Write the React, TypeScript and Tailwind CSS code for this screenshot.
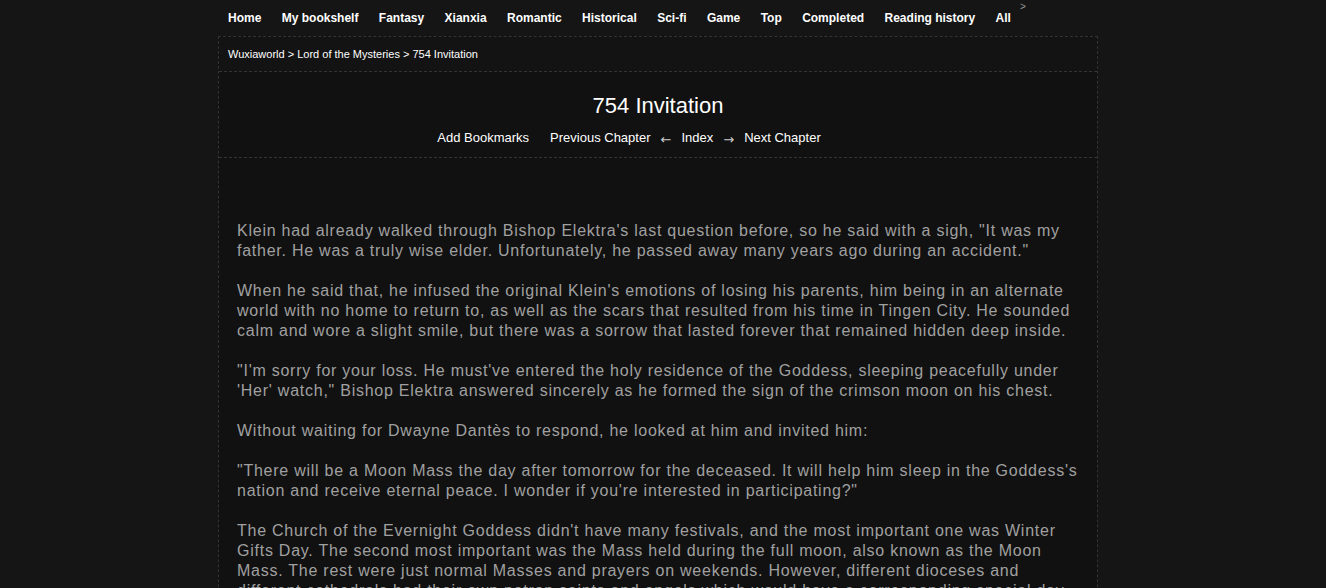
import React from "react";

const navItems = [
  "Home",
  "My bookshelf",
  "Fantasy",
  "Xianxia",
  "Romantic",
  "Historical",
  "Sci-fi",
  "Game",
  "Top",
  "Completed",
  "Reading history",
  "All",
];

const paragraphs = [
  `Klein had already walked through Bishop Elektra's last question before, so he said with a sigh, "It was my father. He was a truly wise elder. Unfortunately, he passed away many years ago during an accident."`,
  `When he said that, he infused the original Klein's emotions of losing his parents, him being in an alternate world with no home to return to, as well as the scars that resulted from his time in Tingen City. He sounded calm and wore a slight smile, but there was a sorrow that lasted forever that remained hidden deep inside.`,
  `"I'm sorry for your loss. He must've entered the holy residence of the Goddess, sleeping peacefully under 'Her' watch," Bishop Elektra answered sincerely as he formed the sign of the crimson moon on his chest.`,
  `Without waiting for Dwayne Dantès to respond, he looked at him and invited him:`,
  `"There will be a Moon Mass the day after tomorrow for the deceased. It will help him sleep in the Goddess's nation and receive eternal peace. I wonder if you're interested in participating?"`,
  `The Church of the Evernight Goddess didn't have many festivals, and the most important one was Winter Gifts Day. The second most important was the Mass held during the full moon, also known as the Moon Mass. The rest were just normal Masses and prayers on weekends. However, different dioceses and different cathedrals had their own patron saints and angels which would have a corresponding special day.`,
];

export default function App() {
  return (
    <div
      className="min-h-screen bg-[#151515] pr-[10px] text-white"
      style={{ fontFamily: '"Liberation Sans", Arial, sans-serif' }}
    >
      <div className="mx-auto w-[880px]">
        {/* top nav */}
        <div className="relative flex h-[36px] items-center pl-[10px]">
          {navItems.map((item) => (
            <a
              key={item}
              className="mr-[20.4px] text-[12px] font-bold leading-none text-white"
            >
              {item}
            </a>
          ))}
          <span className="absolute left-[802px] top-[-1px] text-[10px] text-[#999]">
            &gt;
          </span>
        </div>

        <div className="border border-dashed border-[#333] bg-[#111]">
          {/* breadcrumb */}
          <div className="flex h-[35px] items-center border-b border-dashed border-[#333] bg-[#131313] pl-[9px] text-[11px] text-white">
            Wuxiaworld &gt; Lord of the Mysteries &gt; 754 Invitation
          </div>

          {/* title */}
          <div className="flex h-[86px] flex-col items-center border-b border-dashed border-[#333] pt-[20px]">
            <h1 className="text-[22px] leading-[28px] text-white">
              754 Invitation
            </h1>
            <div className="mt-[8px] flex items-center pr-[58px] text-[13px] leading-[16px] text-white">
              <a>Add Bookmarks</a>
              <a className="ml-[21px]">Previous Chapter</a>
              <span
                className="mx-[10px] mt-[4px] text-[13px] text-[#ccc]"
                style={{ fontFamily: '"DejaVu Sans", sans-serif' }}
              >
                ←
              </span>
              <a>Index</a>
              <span
                className="mx-[10px] mt-[4px] text-[13px] text-[#ccc]"
                style={{ fontFamily: '"DejaVu Sans", sans-serif' }}
              >
                →
              </span>
              <a>Next Chapter</a>
            </div>
          </div>

          {/* content */}
          <div className="px-[18px] pt-[63px] pb-10 text-[16px] leading-[20px] tracking-[0.75px] text-[#a0a0a0]">
            {paragraphs.map((p, i) => (
              <p key={i} className="mb-[20px]">
                {p}
              </p>
            ))}
          </div>
        </div>
      </div>
    </div>
  );
}
